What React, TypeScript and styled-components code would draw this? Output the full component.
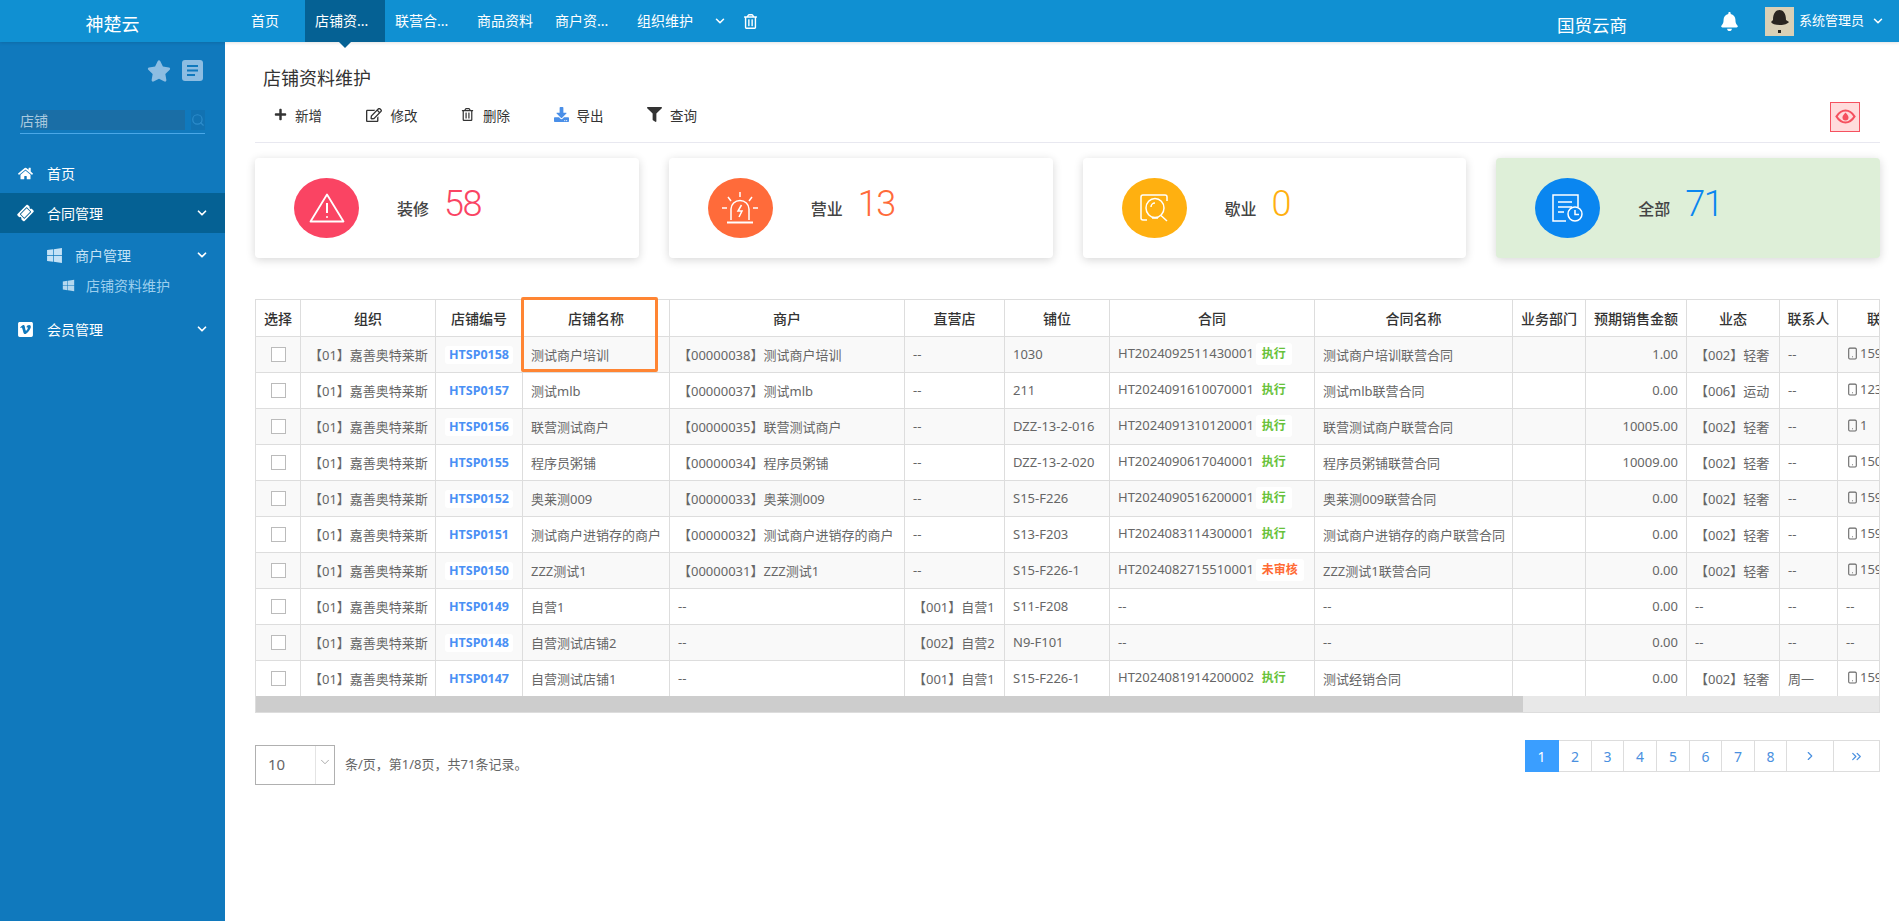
import React from 'react';
import styled, { createGlobalStyle } from 'styled-components';
import { FaHome, FaTicketAlt, FaWindows, FaVimeoSquare, FaStar, FaBell, FaPlus, FaRegEdit, FaRegTrashAlt, FaFilter, FaDownload } from 'react-icons/fa';
import { ChevronDown, ChevronRight, ChevronsRight, Search, Smartphone } from 'lucide-react';

const Global = createGlobalStyle`
  html, body { margin: 0; padding: 0; height: 921px; overflow: hidden; background: #fff; }
  body { font-family: "Noto Sans", "Noto Sans CJK SC", sans-serif; color: #333; }
  * { box-sizing: border-box; }
`;

const Page = styled.div`
  width: 1899px; height: 921px; display: flex; flex-direction: column;
`;
const Header = styled.header`
  height: 42px; flex: none; display: flex; align-items: center; background: #1090d2; color: #fff;
  box-shadow: 0 1px 3px rgba(0,0,0,.12); position: relative; z-index: 2;
`;
const Logo = styled.div`
  width: 225px; flex: none; text-align: center; font-size: 18px; padding-top: 6px; line-height: 36px; height: 42px;
`;
const Tabs = styled.nav`
  display: flex; height: 42px; padding-left: 16px;
`;
const Tab = styled.div<{ $w: number; $active?: boolean }>`
  position: relative; width: ${p => p.$w}px; padding-left: 10px; display: flex; align-items: center;
  font-size: 14px; line-height: 42px; background: ${p => (p.$active ? '#056194' : 'transparent')};
  ${p => p.$active ? `&::after { content: ''; position: absolute; left: 34px; top: 42px; border: 6px solid transparent; border-top-color: #056194; border-bottom: 0; }` : ''}
`;
const HeaderTools = styled.div`
  display: flex; align-items: center; margin-left: 4px; gap: 16px;
`;
const HeaderRight = styled.div`
  margin-left: auto; display: flex; align-items: center; padding-right: 14px;
`;
const Company = styled.div`
  font-size: 17.5px; margin-right: 93px; padding-top: 8px; line-height: 34px; height: 42px;
`;
const Avatar = styled.svg`
  width: 29px; height: 29px; margin-left: 26px; margin-top: 1px; flex: none;
`;
const UserName = styled.span`
  font-size: 13px; margin-left: 5px; margin-right: 7px; padding-bottom: 3px;
`;
const Body = styled.div`
  flex: 1; display: flex; min-height: 0;
`;
const Side = styled.aside`
  width: 225px; flex: none; background: #1079bd; color: #fff;
`;
const SideTools = styled.div`
  display: flex; justify-content: flex-end; align-items: center; gap: 11px; padding: 18px 22px 0 0; height: 39px; color: #8dbde2;
`;
const SearchBox = styled.div`
  margin: 29px 20px 0; display: flex; justify-content: space-between; align-items: flex-start; height: 24px; border-bottom: 1px solid #4aa8e8;
`;
const SearchInput = styled.input`
  width: 165px; height: 20px; border: 0; outline: 0; padding: 0; background: #1a6ea6; color: #a9c9de;
  font: 14px "Noto Sans", "Noto Sans CJK SC", sans-serif;
`;
const SearchBtn = styled.span`
  width: 14px; height: 20px; background: #1272b2; color: #2d8ccb; display: flex; align-items: center; justify-content: center;
`;
const Menu = styled.div`
  margin-top: 19px;
`;
const MenuRow = styled.div<{ $indent: number; $h: number; $active?: boolean }>`
  height: ${p => p.$h}px; display: flex; align-items: center; padding: 0 16px 0 ${p => p.$indent}px;
  background: ${p => (p.$active ? '#056194' : 'transparent')};
  font-size: 14px; color: #fff;
`;
const IconSlot = styled.span<{ $w: number; $gap: number; $color?: string }>`
  width: ${p => p.$w}px; margin-right: ${p => p.$gap}px; display: flex; align-items: center; justify-content: center; flex: none;
  color: ${p => p.$color || '#fff'};
`;
const RowLabel = styled.span<{ $color?: string }>`
  color: ${p => p.$color || '#fff'}; padding-bottom: 1px;
`;
const RowChevron = styled(ChevronDown)`
  margin-left: auto; flex: none;
`;
const SubMenu = styled.div`
  padding: 7px 0 9px;
`;
const Main = styled.main`
  flex: 1; min-width: 0; padding: 24px 19px 0 30px; display: flex; flex-direction: column;
`;
const Title = styled.h1`
  margin: 0; padding-left: 8px; height: 24px; line-height: 24px; font-size: 18px; font-weight: 400; color: #333;
`;
const ToolBar = styled.div`
  margin-top: 12px; height: 41px; padding: 0 20px 11px 19px; border-bottom: 1px solid #e8e8f0; display: flex; align-items: center; gap: 43.500px;
`;
const Tool = styled.div<{ $gap: number }>`
  display: flex; align-items: center; gap: ${p => p.$gap}px; font-size: 13.5px; color: #333; padding-bottom: 4px;
`;
const EyeBtn = styled.div`
  margin-left: auto; width: 30px; height: 30px; background: #ffdcdc; border: 1px solid #f5515f; display: flex; align-items: center; justify-content: center;
`;
const Cards = styled.section`
  margin-top: 15px; display: flex; gap: 30px;
`;
const Card = styled.div<{ $bg?: string }>`
  flex: 1; height: 100px; border-radius: 4px; background: ${p => p.$bg || '#fff'}; box-shadow: 0 2px 10px rgba(0,0,0,.16);
  padding-left: 39px; display: flex; align-items: center;
`;
const Circle = styled.div<{ $c: string }>`
  width: 65px; height: 60px; border-radius: 50%; background: ${p => p.$c}; display: flex; align-items: center; justify-content: center; flex: none;
`;
const CardLabel = styled.span`
  margin-left: 38px; font-size: 16px; color: #444; font-weight: 500; width: 32px; flex: none; white-space: nowrap;
`;
const CardNum = styled.span<{ $c: string }>`
  margin-left: 15px; margin-bottom: 9px; font-family: Roboto, sans-serif; font-weight: 300; font-size: 36px; letter-spacing: -1.5px; line-height: 40px; color: ${p => p.$c};
`;
const TableWrap = styled.div`
  position: relative; margin-top: 41px;
`;
const Clip = styled.div`
  overflow: hidden; border: 1px solid #ddd;
`;
const Table = styled.table`
  border-collapse: separate; border-spacing: 0; table-layout: fixed; width: 1697px; font-size: 13px; color: #666;
`;
const Th = styled.th`
  height: 37px; padding: 0 0 1px; border-right: 1px solid #ddd; border-bottom: 1px solid #ddd; background: #fff;
  font-size: 14px; font-weight: 500; color: #333; text-align: center; white-space: nowrap; overflow: hidden;
`;
const Tr = styled.tr`
  &:nth-child(odd) td { background: #f9f9f9; }
  &:last-child td { border-bottom: 0; height: 35px; }
`;
const Td = styled.td<{ $align?: string }>`
  height: 36px; padding: 0 8px 1px; border-right: 1px solid #ddd; border-bottom: 1px solid #ddd; background: #fff;
  white-space: nowrap; overflow: hidden; text-align: ${p => p.$align || 'left'};
`;
const CheckBox = styled.span`
  display: block; width: 15px; height: 15px; margin: 0 auto; border: 1px solid #bbb; background: #fff;
`;
const Code = styled.span`
  display: inline-block; height: 18px; line-height: 18px; padding: 0 4px; background: #fff; border-radius: 3px; color: #4a90f5; font-weight: 700; font-size: 12.5px;
`;
const Status = styled.span<{ $c: string }>`
  display: inline-block; height: 22px; line-height: 22px; margin-left: 2px; padding: 0 6px; background: #fff; border-radius: 3px; color: ${p => p.$c}; font-weight: 700; font-size: 12px;
`;
const Phone = styled.span`
  display: inline-flex; align-items: center; gap: 1px; color: #666;
`;
const ScrollTrack = styled.div`
  height: 16px; background: #e8e8e8;
`;
const ScrollThumb = styled.div`
  height: 16px; width: 1267px; background: #cdcdcd;
`;
const Highlight = styled.div`
  position: absolute; left: 266px; top: -2px; width: 137px; height: 75px; border: 3px solid #ff8533; border-radius: 2px; pointer-events: none;
`;
const Footer = styled.div`
  margin-top: 27px; display: flex; align-items: flex-start;
`;
const PageSize = styled.div`
  margin-top: 5px; width: 80px; height: 40px; border: 1px solid #b0b0b0; display: flex; align-items: center; font-size: 15px; color: #666;
`;
const PageValue = styled.span`
  width: 60px; padding-left: 12px; height: 100%; line-height: 36px; border-right: 1px solid #e4e4e4;
`;
const PageArrow = styled.span`
  flex: 1; display: flex; justify-content: center; color: #888; padding-bottom: 6px;
`;
const PageInfo = styled.span`
  margin: 4px 0 0 10px; line-height: 40px; font-size: 13px; color: #666;
`;
const Pager = styled.div`
  margin-left: auto; display: flex; height: 32px; border: 1px solid #ddd; border-left: 0;
`;
const PageBtn = styled.span<{ $w: number; $active?: boolean }>`
  width: ${p => p.$w}px; display: flex; align-items: center; justify-content: center; font-size: 14px;
  color: ${p => (p.$active ? '#fff' : '#4a90e0')}; background: ${p => (p.$active ? '#3a9eff' : '#fff')};
  border-right: 1px solid ${p => (p.$active ? '#3a9eff' : '#ddd')};
  &:last-child { border-right: 0; }
  ${p => p.$active ? 'margin: -1px 0;' : ''}
`;

type Row = { code: string; name: string; merchant: string; direct: string; pos: string; contract: string; status?: string; cname: string; money: string; biz: string; contact: string; phone: string };

const rows: Row[] = [
  { code: 'HTSP0158', name: '测试商户培训', merchant: '【00000038】测试商户培训', direct: '--', pos: '1030', contract: 'HT2024092511430001', status: '执行', cname: '测试商户培训联营合同', money: '1.00', biz: '【002】轻奢', contact: '--', phone: '15900001111' },
  { code: 'HTSP0157', name: '测试mlb', merchant: '【00000037】测试mlb', direct: '--', pos: '211', contract: 'HT2024091610070001', status: '执行', cname: '测试mlb联营合同', money: '0.00', biz: '【006】运动', contact: '--', phone: '12345678901' },
  { code: 'HTSP0156', name: '联营测试商户', merchant: '【00000035】联营测试商户', direct: '--', pos: 'DZZ-13-2-016', contract: 'HT2024091310120001', status: '执行', cname: '联营测试商户联营合同', money: '10005.00', biz: '【002】轻奢', contact: '--', phone: '1' },
  { code: 'HTSP0155', name: '程序员粥铺', merchant: '【00000034】程序员粥铺', direct: '--', pos: 'DZZ-13-2-020', contract: 'HT2024090617040001', status: '执行', cname: '程序员粥铺联营合同', money: '10009.00', biz: '【002】轻奢', contact: '--', phone: '15000001111' },
  { code: 'HTSP0152', name: '奥莱测009', merchant: '【00000033】奥莱测009', direct: '--', pos: 'S15-F226', contract: 'HT2024090516200001', status: '执行', cname: '奥莱测009联营合同', money: '0.00', biz: '【002】轻奢', contact: '--', phone: '15900001111' },
  { code: 'HTSP0151', name: '测试商户进销存的商户', merchant: '【00000032】测试商户进销存的商户', direct: '--', pos: 'S13-F203', contract: 'HT2024083114300001', status: '执行', cname: '测试商户进销存的商户联营合同', money: '0.00', biz: '【002】轻奢', contact: '--', phone: '15900001111' },
  { code: 'HTSP0150', name: 'ZZZ测试1', merchant: '【00000031】ZZZ测试1', direct: '--', pos: 'S15-F226-1', contract: 'HT2024082715510001', status: '未审核', cname: 'ZZZ测试1联营合同', money: '0.00', biz: '【002】轻奢', contact: '--', phone: '15900001111' },
  { code: 'HTSP0149', name: '自营1', merchant: '--', direct: '【001】自营1', pos: 'S11-F208', contract: '--', cname: '--', money: '0.00', biz: '--', contact: '--', phone: '--' },
  { code: 'HTSP0148', name: '自营测试店铺2', merchant: '--', direct: '【002】自营2', pos: 'N9-F101', contract: '--', cname: '--', money: '0.00', biz: '--', contact: '--', phone: '--' },
  { code: 'HTSP0147', name: '自营测试店铺1', merchant: '--', direct: '【001】自营1', pos: 'S15-F226-1', contract: 'HT2024081914200002', status: '执行', cname: '测试经销合同', money: '0.00', biz: '【002】轻奢', contact: '周一', phone: '15900001111' },
];

const cols = [45, 135, 87, 147, 235, 100, 105, 205, 198, 73, 101, 93, 58, 115];
const heads = ['选择', '组织', '店铺编号', '店铺名称', '商户', '直营店', '铺位', '合同', '合同名称', '业务部门', '预期销售金额', '业态', '联系人', '联系电话'];

const DocIcon = () => (
  <svg width="21" height="21" viewBox="0 0 21 21">
    <rect width="21" height="21" rx="3" fill="#8dbde2" />
    <path d="M5 6h11M5 10.500h11M5 15h8" stroke="#1079bd" strokeWidth="2" />
  </svg>
);
const EyeIcon = () => (
  <svg width="21" height="15" viewBox="0 0 21 15">
    <path d="M1.500 7.500C4 3.500 7 1.500 10.500 1.500S17 3.500 19.500 7.500C17 11.500 14 13.500 10.500 13.500S4 11.500 1.500 7.500Z" fill="none" stroke="#f5515f" strokeWidth="2.200" />
    <path d="M10.500 3.500C8.500 5.500 7.500 7 7.500 8.500a3 3 0 0 0 6 0C13.500 7 12 5 10.500 3.500Z" fill="#f5515f" />
  </svg>
);
const WarnIcon = () => (
  <svg width="36" height="30" viewBox="0 0 36 30" fill="none" stroke="#fff" strokeWidth="1.800" strokeLinejoin="round">
    <path d="M18 1.500L34.500 28.500H1.500Z" />
    <path d="M18 10v10" strokeWidth="2" />
    <circle cx="18" cy="24" r="1" fill="#fff" stroke="none" />
  </svg>
);
const SirenIcon = () => (
  <svg width="36" height="32" viewBox="0 0 36 32" fill="none" stroke="#fff" strokeWidth="1.500">
    <path d="M9 28V17a9 8.500 0 0 1 18 0v11" />
    <path d="M5 30.500h26" strokeWidth="2" />
    <path d="M19.500 13l-3.500 6h4l-3 6" />
    <path d="M18 0v5M6 5l3 4M30 5l-3 4M0 16h5M31 16h5" />
  </svg>
);
const ScanIcon = () => (
  <svg width="29" height="28" viewBox="0 0 29 28" fill="none" stroke="#fff" strokeWidth="1.500">
    <path d="M7 26H3a2 2 0 0 1-2-2V3a2 2 0 0 1 2-2h22a2 2 0 0 1 2 2v4" />
    <ellipse cx="15" cy="14" rx="9" ry="9.500" />
    <path d="M11 13a4 4 0 0 1 4-4M21 21.500l6 5.500M12 24h6" />
  </svg>
);
const ClockDocIcon = () => (
  <svg width="31" height="28" viewBox="0 0 31 28" fill="none" stroke="#fff" strokeWidth="1.500">
    <path d="M14 27H1V1h25v12" />
    <path d="M6 8h14M6 13h14M6 18h6" />
    <circle cx="23" cy="20" r="7" fill="#0a86f0" />
    <path d="M23 16v4.500h4" />
  </svg>
);

const cardData = [
  { label: '装修', num: '58', c: '#fa4463', circle: '#fa4463', icon: <WarnIcon /> },
  { label: '营业', num: '13', c: '#ff6b3a', circle: '#ff6b3a', icon: <SirenIcon /> },
  { label: '歇业', num: '0', c: '#ffb010', circle: '#ffb010', icon: <ScanIcon /> },
  { label: '全部', num: '71', c: '#0a86f0', circle: '#0a86f0', icon: <ClockDocIcon />, bg: '#deefd8' },
];

const tabs = [
  { t: '首页', w: 64 }, { t: '店铺资...', w: 80, active: true }, { t: '联营合...', w: 82 },
  { t: '商品资料', w: 78 }, { t: '商户资...', w: 82 }, { t: '组织维护', w: 82 },
];

const pages = [
  { c: '1', w: 34, active: true }, { c: '2', w: 33 }, { c: '3', w: 32 }, { c: '4', w: 33 }, { c: '5', w: 33 },
  { c: '6', w: 32 }, { c: '7', w: 33 }, { c: '8', w: 32 },
  { c: <ChevronRight size={14} />, w: 47 }, { c: <ChevronsRight size={15} />, w: 45 },
];

export default function App() {
  return (
    <Page>
      <Global />
      <Header>
        <Logo>神楚云</Logo>
        <Tabs>
          {tabs.map(t => <Tab key={t.t} $w={t.w} $active={t.active}>{t.t}</Tab>)}
        </Tabs>
        <HeaderTools>
          <ChevronDown size={14} strokeWidth={2.6} />
          <FaRegTrashAlt size={15} />
        </HeaderTools>
        <HeaderRight>
          <Company>国贸云商</Company>
          <FaBell size={19} />
          <Avatar viewBox="0 0 29 29">
            <rect width="29" height="29" fill="#d9d0b6" />
            <path d="M8 13c0-7 3-10 6.500-10S21 6 21 13l3 2c-2 2-4 3-9 3s-8-1-9-3Z" fill="#2a2620" />
            <rect x="13" y="23" width="3" height="3" fill="#2a2620" />
          </Avatar>
          <UserName>系统管理员</UserName>
          <ChevronDown size={14} strokeWidth={2.6} />
        </HeaderRight>
      </Header>
      <Body>
        <Side>
          <SideTools>
            <FaStar size={24} />
            <DocIcon />
          </SideTools>
          <SearchBox>
            <SearchInput defaultValue="店铺" />
            <SearchBtn><Search size={14} /></SearchBtn>
          </SearchBox>
          <Menu>
            <MenuRow $indent={18} $h={40}>
              <IconSlot $w={15} $gap={14}><FaHome size={15} /></IconSlot>
              <RowLabel>首页</RowLabel>
            </MenuRow>
            <MenuRow $indent={18} $h={40} $active>
              <IconSlot $w={15} $gap={14}><FaTicketAlt size={16} style={{ transform: 'rotate(-45deg)' }} /></IconSlot>
              <RowLabel>合同管理</RowLabel>
              <RowChevron size={14} strokeWidth={3} />
            </MenuRow>
            <SubMenu>
              <MenuRow $indent={46} $h={30}>
                <IconSlot $w={17} $gap={12} $color="#c4e2f6"><FaWindows size={17} /></IconSlot>
                <RowLabel $color="#c4e2f6">商户管理</RowLabel>
                <RowChevron size={14} strokeWidth={3} />
              </MenuRow>
              <MenuRow $indent={62} $h={30}>
                <IconSlot $w={13} $gap={11} $color="#b4d8ef"><FaWindows size={13} /></IconSlot>
                <RowLabel $color="#9ccfee">店铺资料维护</RowLabel>
              </MenuRow>
            </SubMenu>
            <MenuRow $indent={18} $h={40}>
              <IconSlot $w={15} $gap={14}><FaVimeoSquare size={17} /></IconSlot>
              <RowLabel>会员管理</RowLabel>
              <RowChevron size={14} strokeWidth={3} />
            </MenuRow>
          </Menu>
        </Side>
        <Main>
          <Title>店铺资料维护</Title>
          <ToolBar>
            <Tool $gap={8}><FaPlus size={13} />新增</Tool>
            <Tool $gap={9}><FaRegEdit size={16} />修改</Tool>
            <Tool $gap={9}><FaRegTrashAlt size={13} />删除</Tool>
            <Tool $gap={8}><FaDownload size={15} color="#4a8fe8" />导出</Tool>
            <Tool $gap={8}><FaFilter size={15} />查询</Tool>
            <EyeBtn><EyeIcon /></EyeBtn>
          </ToolBar>
          <Cards>
            {cardData.map(c => (
              <Card key={c.label} $bg={c.bg}>
                <Circle $c={c.circle}>{c.icon}</Circle>
                <CardLabel>{c.label}</CardLabel>
                <CardNum $c={c.c}>{c.num}</CardNum>
              </Card>
            ))}
          </Cards>
          <TableWrap>
            <Clip>
              <Table>
                <colgroup>
                  {cols.map((w, i) => <col key={i} style={{ width: w }} />)}
                </colgroup>
                <thead>
                  <tr>{heads.map(h => <Th key={h}>{h}</Th>)}</tr>
                </thead>
                <tbody>
                  {rows.map(r => (
                    <Tr key={r.code}>
                      <Td $align="center"><CheckBox /></Td>
                      <Td $align="center">【01】嘉善奥特莱斯</Td>
                      <Td $align="center"><Code>{r.code}</Code></Td>
                      <Td>{r.name}</Td>
                      <Td>{r.merchant}</Td>
                      <Td>{r.direct}</Td>
                      <Td>{r.pos}</Td>
                      <Td>
                        {r.contract}
                        {r.status && <Status $c={r.status === '执行' ? '#67c23a' : '#ff6b35'}>{r.status}</Status>}
                      </Td>
                      <Td>{r.cname}</Td>
                      <Td />
                      <Td $align="right">{r.money}</Td>
                      <Td>{r.biz}</Td>
                      <Td>{r.contact}</Td>
                      <Td>
                        {r.phone === '--' ? '--' : <Phone><Smartphone size={13} />{r.phone}</Phone>}
                      </Td>
                    </Tr>
                  ))}
                </tbody>
              </Table>
              <ScrollTrack><ScrollThumb /></ScrollTrack>
            </Clip>
            <Highlight />
          </TableWrap>
          <Footer>
            <PageSize>
              <PageValue>10</PageValue>
              <PageArrow><ChevronDown size={14} strokeWidth={1.2} /></PageArrow>
            </PageSize>
            <PageInfo>条/页，第1/8页，共71条记录。</PageInfo>
            <Pager>
              {pages.map((p, i) => <PageBtn key={i} $w={p.w} $active={p.active}>{p.c}</PageBtn>)}
            </Pager>
          </Footer>
        </Main>
      </Body>
    </Page>
  );
}
